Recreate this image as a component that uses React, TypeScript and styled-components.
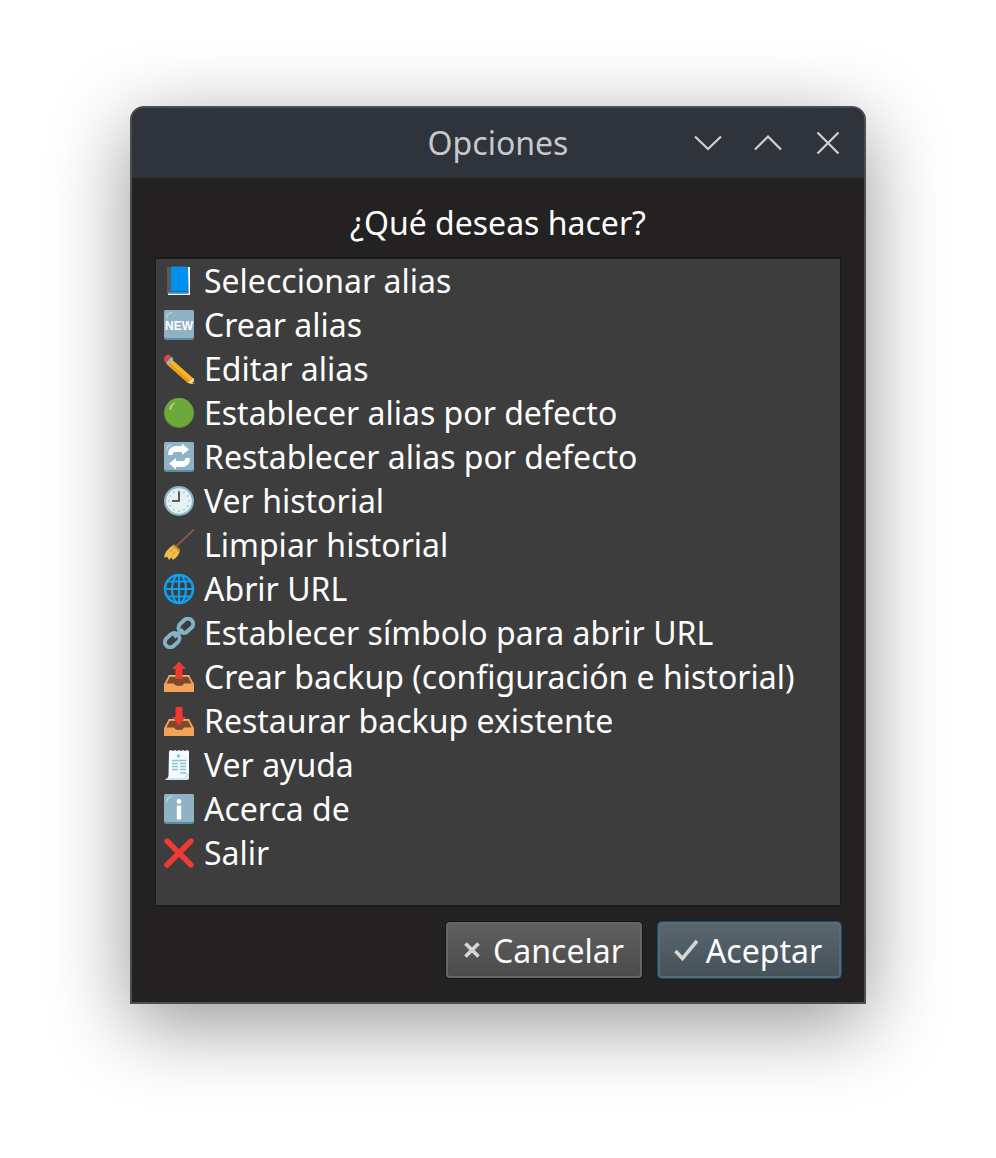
import React from "react";
import styled, { createGlobalStyle } from "styled-components";

const Global = createGlobalStyle`
  html, body { margin: 0; padding: 0; background: #ffffff; }
  body { font-family: "Noto Sans", "Open Sans", sans-serif; }
`;

const Page = styled.div`
  width: 996px;
  height: 1158px;
  padding: 106px 130px 0;
  box-sizing: border-box;
  overflow: hidden;
`;

const Window = styled.div`
  width: 736px;
  height: 898px;
  box-sizing: border-box;
  display: flex;
  flex-direction: column;
  border: 2px solid #4b4e53;
  border-radius: 14px 14px 0 0;
  background: #232122;
  box-shadow: 0 20px 80px 0 rgba(0, 0, 0, 0.42);
  overflow: hidden;
`;

const TitleBar = styled.header`
  flex: 0 0 70px;
  display: grid;
  grid-template-columns: 1fr auto 1fr;
  align-items: center;
  background: #2f333b;
  padding-right: 6px;
  padding-left: 6px;
`;

const Title = styled.div`
  grid-column: 2;
  font-size: 32px;
  line-height: 70px;
  color: #c6c8cb;
`;

const Controls = styled.div`
  grid-column: 3;
  justify-self: end;
  display: flex;
`;

const Control = styled.div`
  width: 60px;
  height: 70px;
  display: flex;
  align-items: center;
  justify-content: center;
`;

const Body = styled.main`
  flex: 1;
  display: flex;
  flex-direction: column;
  padding: 0 23px;
`;

const Question = styled.div`
  height: 79px;
  line-height: 90px;
  text-align: center;
  font-size: 32px;
  color: #fcfcfc;
`;

const List = styled.ul`
  list-style: none;
  margin: 0;
  padding: 0;
  height: 650px;
  box-sizing: border-box;
  background: #3d3d3d;
  border: 1px solid #1b1a1a;
  border-top-width: 2px;
  border-bottom-width: 2px;
`;

const Row = styled.li`
  height: 44px;
  display: flex;
  align-items: center;
  padding-left: 7px;
  gap: 9px;
  font-size: 32px;
  color: #fcfcfc;
  white-space: nowrap;
`;

const Label = styled.span`
  margin-top: -2px;
`;

const Emoji = styled.svg`
  flex: 0 0 32px;
  width: 32px;
  height: 32px;
`;

const Footer = styled.footer`
  display: flex;
  justify-content: flex-end;
  align-items: center;
  gap: 16px;
  height: 86px;
`;

const Button = styled.div<{ $primary?: boolean }>`
  box-sizing: border-box;
  width: ${(p) => (p.$primary ? "183px" : "196px")};
  height: 56px;
  padding-right: ${(p) => (p.$primary ? "3px" : "0")};
  display: flex;
  align-items: center;
  justify-content: center;
  gap: ${(p) => (p.$primary ? "8px" : "13px")};
  font-size: 32px;
  color: #fcfcfc;
  border-radius: 4px;
  border: 2px solid ${(p) => (p.$primary ? "#5c6a72" : "#676767")};
  background: ${(p) =>
    p.$primary
      ? "linear-gradient(#59666d, #46525a)"
      : "linear-gradient(#5f5f5f, #4b4b4b)"};
  box-shadow: 0 0 0 1px ${(p) => (p.$primary ? "#0d4f73" : "#161616")};
`;

const ChevronDown = () => (
  <svg width="30" height="20" viewBox="0 0 30 20" fill="none" stroke="#d0d1d2" strokeWidth="2.2">
    <path d="M2 3.5 L15 16 L28 3.5" />
  </svg>
);
const ChevronUp = () => (
  <svg width="30" height="20" viewBox="0 0 30 20" fill="none" stroke="#d0d1d2" strokeWidth="2.2">
    <path d="M2 16.5 L15 3.5 L28 16.5" />
  </svg>
);
const Close = () => (
  <svg width="26" height="26" viewBox="0 0 26 26" fill="none" stroke="#d0d1d2" strokeWidth="2.2">
    <path d="M2.5 2.5 L23.5 23.5 M23.5 2.5 L2.5 23.5" />
  </svg>
);
const CancelMark = () => (
  <svg width="16" height="16" viewBox="0 0 16 16" fill="none" stroke="#d6d6d6" strokeWidth="3.8">
    <path d="M1.5 1.5 L14.5 14.5 M14.5 1.5 L1.5 14.5" />
  </svg>
);
const CheckMark = () => (
  <svg width="24" height="22" viewBox="0 0 24 22" fill="none" stroke="#d6d6d6" strokeWidth="3.6">
    <path d="M1.5 12 L8.5 19.5 L23 2" />
  </svg>
);

const Tile: React.FC<{ children?: React.ReactNode }> = ({ children }) => (
  <>
    <rect x="1" y="1" width="30" height="30" rx="2" fill="#5f8ca0" />
    <rect x="1" y="1" width="30" height="28" rx="2" fill="#8fb3c5" />
    <path d="M3 9 Q3 3 9 3 L9 4.5 Q4.5 4.5 4.5 9 Z" fill="#b5cfdc" />
    {children}
  </>
);

const BookIcon = (
  <>
    <path d="M4 2 L8 2 L8 28 L4 29 Z" fill="#5a5a5a" />
    <rect x="8" y="1.5" width="17" height="25" fill="#0090ee" rx="1" />
    <path d="M25 2 H27 V30 H5 V28.5 H25.5 Z" fill="#f4f8fb" />
    <rect x="5" y="27" width="20" height="1.6" fill="#2f9ad9" />
  </>
);
const NewIcon = (
  <Tile>
    <text x="16" y="20.5" textAnchor="middle" fontFamily="'Liberation Sans', sans-serif" fontWeight="700" fontSize="12" fill="#ffffff">NEW</text>
  </Tile>
);
const PencilIcon = (
  <>
    <path d="M9 6.5 L31 26 L30 31 L25 30 L3.5 11 Z" fill="#f7b32b" />
    <path d="M3.5 11 L25 30 L27 28 L6 9 Z" fill="#ee9b1b" />
    <path d="M1 6 Q1 3.5 3 2.5 Q5 1 7 2.5 L9.5 5 L4 11 L1.5 8.5 Z" fill="#e2453c" />
    <path d="M3.2 9.8 L8.4 4 L10.5 6 L5.3 11.8 Z" fill="#82c0d8" />
    <path d="M25 30 L30.5 25 L31.5 31 Z" fill="#f3dcb6" />
    <path d="M29 30 L31 28 L31.5 31 Z" fill="#444" />
  </>
);
const GreenIcon = (
  <>
    <circle cx="16" cy="16" r="15" fill="#5f9430" />
    <circle cx="16" cy="15.4" r="14.4" fill="#6fa83a" />
    <path d="M6 12 Q7 7 13 5 Q9 8 8 13 Z" fill="#b7d59a" />
  </>
);
const RefreshIcon = (
  <Tile>
    <path d="M5 14 Q5 6 12 5 H19 V2.5 L26 8.5 L19 14 V11 H12 Q10 11 9.5 14 Z" fill="#ffffff" />
    <path d="M27 17 Q27 25 20 26 H13 V28.5 L6 22.5 L13 17 V20 H20 Q22 20 22.5 17 Z" fill="#ffffff" />
  </Tile>
);
const ClockIcon = (
  <>
    <circle cx="16" cy="16" r="15" fill="#8db7c7" />
    <circle cx="16" cy="16" r="12.8" fill="#e6f1f5" />
    <g stroke="#8db7c7" strokeWidth="1.2">
      <path d="M16 5 V7 M16 25 V27 M5 16 H7 M25 16 H27 M10.5 6.5 L11.5 8 M21.5 6.5 L20.5 8 M10.5 25.5 L11.5 24 M21.5 25.5 L20.5 24 M6.5 10.5 L8 11.5 M6.5 21.5 L8 20.5 M25.5 10.5 L24 11.5 M25.5 21.5 L24 20.5" />
    </g>
    <path d="M16 6.5 V16 H9" fill="none" stroke="#3a2f2b" strokeWidth="1.6" />
  </>
);
const BroomIcon = (
  <>
    <path d="M31 0.5 L13 17.5" stroke="#8b5a44" strokeWidth="1.8" fill="none" />
    <path d="M11 15.5 L17 21 Q16 27 10 31 L8.5 28.5 L6 31 L4.5 28 L1 28.5 Q2 21 11 15.5 Z" fill="#f2bd4a" />
    <path d="M11 15.5 L17 21 L15.8 23 L9.5 17 Z" fill="#cf9429" />
    <path d="M7 23 L10.5 20 M9.5 26 L12.5 22.5" stroke="#c98f25" strokeWidth="1" fill="none" />
  </>
);
const GlobeIcon = (
  <g fill="none" stroke="#12a0ee" strokeWidth="2.2">
    <circle cx="16" cy="16" r="14" strokeWidth="2.6" />
    <ellipse cx="16" cy="16" rx="7" ry="14" />
    <path d="M16 2 V30 M2 16 H30 M4.5 8.5 H27.5 M4.5 23.5 H27.5" />
  </g>
);
const LinkIcon = (
  <g fill="none" stroke="#83b2c6" strokeWidth="4">
    <rect x="15" y="3.5" width="16" height="10.5" rx="5.2" transform="rotate(-42 23 9)" />
    <rect x="1" y="18" width="16" height="10.5" rx="5.2" transform="rotate(-42 9 23)" />
    <path d="M11 20 L20 12.5" />
  </g>
);
const Tray = (
  <>
    <path d="M6 14 H26 L31 23 V31 H1 V23 Z" fill="#f2a25b" />
    <path d="M7 15.5 H25 L28.5 22.5 H21 Q20 25 16 25 Q12 25 11 22.5 H3.5 Z" fill="#7f4a2c" />
    <path d="M6 14 H26 L26.8 15.5 H5.2 Z" fill="#e3bd88" />
  </>
);
const OutboxIcon = (
  <>
    {Tray}
    <path d="M16 0.5 L23 8 H19.5 V18 H12.5 V8 H9 Z" fill="#f0392f" />
  </>
);
const InboxIcon = (
  <>
    {Tray}
    <path d="M12.5 2 H19.5 V12 H23 L16 20 L9 12 H12.5 Z" fill="#f0392f" />
  </>
);
const ReceiptIcon = (
  <>
    <path d="M6 2 L8 1 L10 2 L12 1 L14 2 L16 1 L18 2 L20 1 L22 2 L24 1 L26 2 V29 Q26 31 24 31 H2 Q5 30 5.5 27 Z" fill="#f4fafd" />
    <path d="M26 24 Q26 30 23 31 H2 L4 29 H21 Q23 29 23.5 24 Z" fill="#cfe6f0" />
    <circle cx="15.5" cy="7" r="1.8" fill="#7cc6e4" />
    <path d="M9 11.5 H23 M9 14.5 H15 M17 14.5 H23 M9 17.5 H15 M17 17.5 H23 M9 20.5 H15 M17 20.5 H23 M17 24 H23" stroke="#8fbfd4" strokeWidth="1.3" fill="none" />
  </>
);
const InfoIcon = (
  <Tile>
    <circle cx="16" cy="8.5" r="2.4" fill="#ffffff" />
    <rect x="13.8" y="12.5" width="4.4" height="14" fill="#ffffff" />
  </Tile>
);
const CrossIcon = (
  <path d="M4 4 L28 28 M28 4 L4 28" stroke="#ef3b32" strokeWidth="5.4" strokeLinecap="round" fill="none" />
);

const items: [React.ReactNode, string][] = [
  [BookIcon, "Seleccionar alias"],
  [NewIcon, "Crear alias"],
  [PencilIcon, "Editar alias"],
  [GreenIcon, "Establecer alias por defecto"],
  [RefreshIcon, "Restablecer alias por defecto"],
  [ClockIcon, "Ver historial"],
  [BroomIcon, "Limpiar historial"],
  [GlobeIcon, "Abrir URL"],
  [LinkIcon, "Establecer símbolo para abrir URL"],
  [OutboxIcon, "Crear backup (configuración e historial)"],
  [InboxIcon, "Restaurar backup existente"],
  [ReceiptIcon, "Ver ayuda"],
  [InfoIcon, "Acerca de"],
  [CrossIcon, "Salir"],
];

export default function App() {
  return (
    <Page>
      <Global />
      <Window>
        <TitleBar>
          <Title>Opciones</Title>
          <Controls>
            <Control><ChevronDown /></Control>
            <Control><ChevronUp /></Control>
            <Control><Close /></Control>
          </Controls>
        </TitleBar>
        <Body>
          <Question>¿Qué deseas hacer?</Question>
          <List>
            {items.map(([icon, label]) => (
              <Row key={label}>
                <Emoji viewBox="0 0 32 32">{icon}</Emoji>
                <Label>{label}</Label>
              </Row>
            ))}
          </List>
          <Footer>
            <Button><CancelMark />Cancelar</Button>
            <Button $primary><CheckMark />Aceptar</Button>
          </Footer>
        </Body>
      </Window>
    </Page>
  );
}
